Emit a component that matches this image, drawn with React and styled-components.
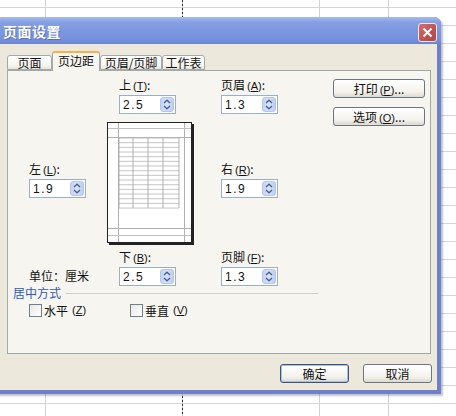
import React from 'react'
import styled, { createGlobalStyle } from 'styled-components'

const GlobalStyle = createGlobalStyle`
  html, body {
    margin: 0;
    padding: 0;
    background: #fff;
  }
  body {
    font-family: 'Liberation Sans', 'Noto Sans CJK SC', sans-serif;
    font-size: 12px;
    color: #111;
  }
`

// spreadsheet behind the dialog
const Sheet = styled.div`
  position: relative;
  width: 456px;
  height: 416px;
  overflow: hidden;
  background-color: #fff;
  background-image:
    repeating-linear-gradient(to bottom, #2a2a2a 0 2px, transparent 2px 4px),
    repeating-linear-gradient(to right, transparent 0 45px, #d2d2d2 45px 46px, transparent 46px 68.5px),
    repeating-linear-gradient(to bottom, transparent 0 7px, #d6d6d6 7px 8px, transparent 8px 18px);
  background-size: 1px 100%, 100% 100%, 100% 100%;
  background-position: 182px 0, 0 0, 0 0;
  background-repeat: no-repeat, no-repeat, no-repeat;
`

const Dialog = styled.div`
  position: absolute;
  left: -4px;
  top: 17px;
  width: 445px;
  height: 377px;
  display: flex;
  flex-direction: column;
  background: #6f7fc8;
  border-radius: 7px 7px 0 0;
  box-shadow: 2px 2px 2px rgba(80, 80, 110, 0.35);
`

const TitleBar = styled.div`
  height: 27px;
  display: flex;
  align-items: center;
  justify-content: space-between;
  padding: 0 4px 0 7px;
  border-radius: 7px 7px 0 0;
  background: linear-gradient(#a9bbef, #86a0e3 18%, #7a96de 55%, #7490dc 85%, #6a84cf);
`

const Title = styled.span`
  color: #fff;
  font-family: 'Noto Sans CJK SC', sans-serif;
  font-size: 14px;
  font-weight: 700;
  letter-spacing: 0.5px;
  text-shadow: 1px 1px 0 rgba(60, 80, 150, 0.5);
`

const CloseButton = styled.div`
  width: 19px;
  height: 19px;
  margin-top: 3px;
  box-sizing: border-box;
  border: 1px solid #f0e6ea;
  border-radius: 3px;
  background: linear-gradient(135deg, #d27070, #c05050 60%, #b04848);
  display: flex;
  align-items: center;
  justify-content: center;
`

const Body = styled.div`
  flex: 1;
  margin: 0 4px 4px 4px;
  padding: 7px 6px 0 7px;
  background: #ece9dc;
  display: flex;
  flex-direction: column;
`

const TabStrip = styled.div`
  display: flex;
  align-items: flex-end;
  height: 19px;
  position: relative;
  z-index: 1;
`

const Tab = styled.div`
  box-sizing: border-box;
  width: ${p => p.$w}px;
  height: ${p => (p.$active ? 20 : 15)}px;
  margin-bottom: ${p => (p.$active ? -1 : 0)}px;
  border: 1px solid #a3a8a8;
  border-bottom: ${p => (p.$active ? 'none' : '1px solid #a3a8a8')};
  border-top: ${p => (p.$active ? '2px solid #f2b24a' : '1px solid #a3a8a8')};
  border-radius: 3px 3px 0 0;
  background: ${p => (p.$active ? '#f6f5f0' : 'linear-gradient(#ffffff, #f5f4ef 75%, #e6e4da)')};
  font-family: 'Noto Sans CJK SC', sans-serif;
  font-size: 12px;
  line-height: ${p => (p.$active ? 15 : 13)}px;
  text-align: center;
  color: #111;
`

const Panel = styled.div`
  box-sizing: border-box;
  height: 284px;
  border: 1px solid #a3a8a8;
  background: #f6f5f0;
  padding-top: 7px;
`

const MarginGrid = styled.div`
  display: grid;
  grid-template-columns: 78px 87px 27px 112px 92px;
  grid-template-rows: 35px 123px 35px;
  row-gap: 7px;
  margin-left: 21px;
`

const Field = styled.div`
  grid-column: ${p => p.$col};
  grid-row: ${p => p.$row};
  margin-left: ${p => p.$indent || 0}px;
  margin-top: ${p => p.$top || 0}px;
  align-self: start;
  display: flex;
  flex-direction: column;
  gap: 2px;
`

const Label = styled.div`
  font-family: 'Noto Sans CJK SC', sans-serif;
  font-size: 12px;
  line-height: 14px;
  color: #111;
  white-space: nowrap;
`

// mnemonic key such as (T), drawn a little apart from the caption
const Key = styled.span`
  margin-left: 2px;
  font-family: 'Liberation Sans', sans-serif;
  font-size: 11px;

  u {
    text-underline-offset: 1px;
  }
`

const SpinBox = styled.div`
  box-sizing: border-box;
  width: 57px;
  height: 19px;
  border: 1px solid #9aaec6;
  background: #fff;
  display: flex;
  align-items: center;
  justify-content: space-between;
  padding: 0 1px 0 3px;
`

const SpinValue = styled.span`
  font-family: 'Liberation Sans', sans-serif;
  font-size: 12px;
  letter-spacing: 1.5px;
  color: #111;
`

const SpinButton = styled.div`
  box-sizing: border-box;
  width: 14px;
  height: 15px;
  border-radius: 3px;
  border: 1px solid #b6c6ea;
  background: linear-gradient(90deg, #c3d3f8, #d6e1fb 50%, #bccdf5);
  display: flex;
  align-items: center;
  justify-content: center;
`

const Preview = styled.div`
  grid-column: 2;
  grid-row: 2;
  margin-top: 2px;
`

const SideButtons = styled.div`
  grid-column: 5;
  grid-row: 1 / 3;
  display: flex;
  flex-direction: column;
  gap: 9px;
  margin-top: 1px;
`

const Button = styled.div`
  box-sizing: border-box;
  width: ${p => p.$w}px;
  height: 19px;
  border: 1px solid ${p => (p.$default ? '#3d5579' : '#6b7585')};
  border-radius: 3px;
  background: linear-gradient(#ffffff, #f3f2ec 70%, #dcd9cd);
  box-shadow: ${p => (p.$default ? 'inset 0 0 0 1px #a9bfe8' : 'none')};
  font-family: 'Noto Sans CJK SC', sans-serif;
  font-size: 12px;
  line-height: 17px;
  text-align: center;
  color: #111;
  white-space: nowrap;
`

const UnitText = styled.div`
  grid-column: 1;
  grid-row: 3;
  margin-top: 16px;
  font-family: 'Noto Sans CJK SC', sans-serif;
  font-size: 12px;
  line-height: 19px;
`

const Group = styled.div`
  width: 305px;
  margin: 1px 0 0 5px;
`

const GroupHeader = styled.div`
  display: flex;
  align-items: center;
  gap: 5px;
  font-family: 'Noto Sans CJK SC', sans-serif;
  font-size: 12px;
  line-height: 14px;
  color: #2d5bb8;

  &::after {
    content: '';
    flex: 1;
    height: 1px;
    background: #d3d1c4;
  }
`

const CheckRow = styled.div`
  display: flex;
  padding-left: 16px;
  margin-top: 4px;
`

const CheckItem = styled.label`
  width: 101px;
  display: flex;
  align-items: center;
  gap: 2px;
  font-family: 'Noto Sans CJK SC', sans-serif;
  font-size: 12px;
  line-height: 13px;
`

const Box = styled.span`
  box-sizing: border-box;
  width: 13px;
  height: 13px;
  border: 1px solid #6e7f94;
  background: linear-gradient(135deg, #e8e7e0, #ffffff);
`

const Footer = styled.div`
  display: flex;
  justify-content: flex-end;
  gap: 14px;
  margin: 10px -1px 0 0;
`

function Spin({ value }) {
  return (
    <SpinBox>
      <SpinValue>{value}</SpinValue>
      <SpinButton>
        <svg width="8" height="11" viewBox="0 0 8 11">
          <path d="M1 4 L4 1.2 L7 4 M1 7 L4 9.8 L7 7" fill="none" stroke="#4a5f8c" strokeWidth="1.3" />
        </svg>
      </SpinButton>
    </SpinBox>
  )
}

function PagePreview() {
  const rows = []
  for (let i = 0; i <= 15; i++) {
    const y = 16 + i * 4.67
    rows.push(<line key={i} x1="12" x2="72" y1={y} y2={y} stroke="#b8b8b8" strokeWidth="0.8" />)
  }
  return (
    <svg width="87" height="123" viewBox="0 0 87 123">
      <rect x="2" y="2" width="85" height="121" fill="#222" />
      <rect x="0.5" y="0.5" width="84" height="120" fill="#fff" stroke="#222" />
      <line x1="11.5" x2="11.5" y1="1" y2="120" stroke="#b0b0b0" />
      <line x1="77.5" x2="77.5" y1="1" y2="120" stroke="#b0b0b0" />
      <line x1="1" x2="84" y1="6.5" y2="6.5" stroke="#c0c0c0" />
      <line x1="1" x2="84" y1="15.5" y2="15.5" stroke="#b0b0b0" />
      <line x1="1" x2="84" y1="106.5" y2="106.5" stroke="#b0b0b0" />
      <line x1="1" x2="84" y1="113.5" y2="113.5" stroke="#c0c0c0" />
      {rows}
      {[12, 26, 41, 56, 72].map(x => (
        <line key={x} x1={x} x2={x} y1="16" y2="86" stroke="#a8a8a8" strokeWidth="0.9" />
      ))}
    </svg>
  )
}

const K = ({ k }) => (
  <Key>
    (<u>{k}</u>)
  </Key>
)

export default function App() {
  return (
    <>
      <GlobalStyle />
      <Sheet>
        <Dialog>
          <TitleBar>
            <Title>页面设置</Title>
            <CloseButton>
              <svg width="11" height="11" viewBox="0 0 11 11">
                <path d="M1.5 1.5 L9.5 9.5 M9.5 1.5 L1.5 9.5" stroke="#fff" strokeWidth="2" />
              </svg>
            </CloseButton>
          </TitleBar>

          <Body>
            <TabStrip>
              <Tab $w={45}>页面</Tab>
              <Tab $w={48} $active>页边距</Tab>
              <Tab $w={62}>页眉/页脚</Tab>
              <Tab $w={43}>工作表</Tab>
            </TabStrip>

            <Panel>
              <MarginGrid>
                <Field $col={2} $row={1} $indent={12}>
                  <Label>上<K k="T" />:</Label>
                  <Spin value="2.5" />
                </Field>
                <Field $col={4} $row={1}>
                  <Label>页眉<K k="A" />:</Label>
                  <Spin value="1.3" />
                </Field>
                <SideButtons>
                  <Button $w={92}>打印<K k="P" />...</Button>
                  <Button $w={92}>选项<K k="O" />...</Button>
                </SideButtons>

                <Field $col={1} $row={2} $top={42}>
                  <Label>左<K k="L" />:</Label>
                  <Spin value="1.9" />
                </Field>
                <Preview>
                  <PagePreview />
                </Preview>
                <Field $col={4} $row={2} $top={42}>
                  <Label>右<K k="R" />:</Label>
                  <Spin value="1.9" />
                </Field>

                <UnitText>单位：厘米</UnitText>
                <Field $col={2} $row={3} $indent={12}>
                  <Label>下<K k="B" />:</Label>
                  <Spin value="2.5" />
                </Field>
                <Field $col={4} $row={3}>
                  <Label>页脚<K k="F" />:</Label>
                  <Spin value="1.3" />
                </Field>
              </MarginGrid>

              <Group>
                <GroupHeader>居中方式</GroupHeader>
                <CheckRow>
                  <CheckItem>
                    <Box />
                    水平<K k="Z" />
                  </CheckItem>
                  <CheckItem>
                    <Box />
                    垂直<K k="V" />
                  </CheckItem>
                </CheckRow>
              </Group>
            </Panel>

            <Footer>
              <Button $w={69} $default>确定</Button>
              <Button $w={69}>取消</Button>
            </Footer>
          </Body>
        </Dialog>
      </Sheet>
    </>
  )
}
